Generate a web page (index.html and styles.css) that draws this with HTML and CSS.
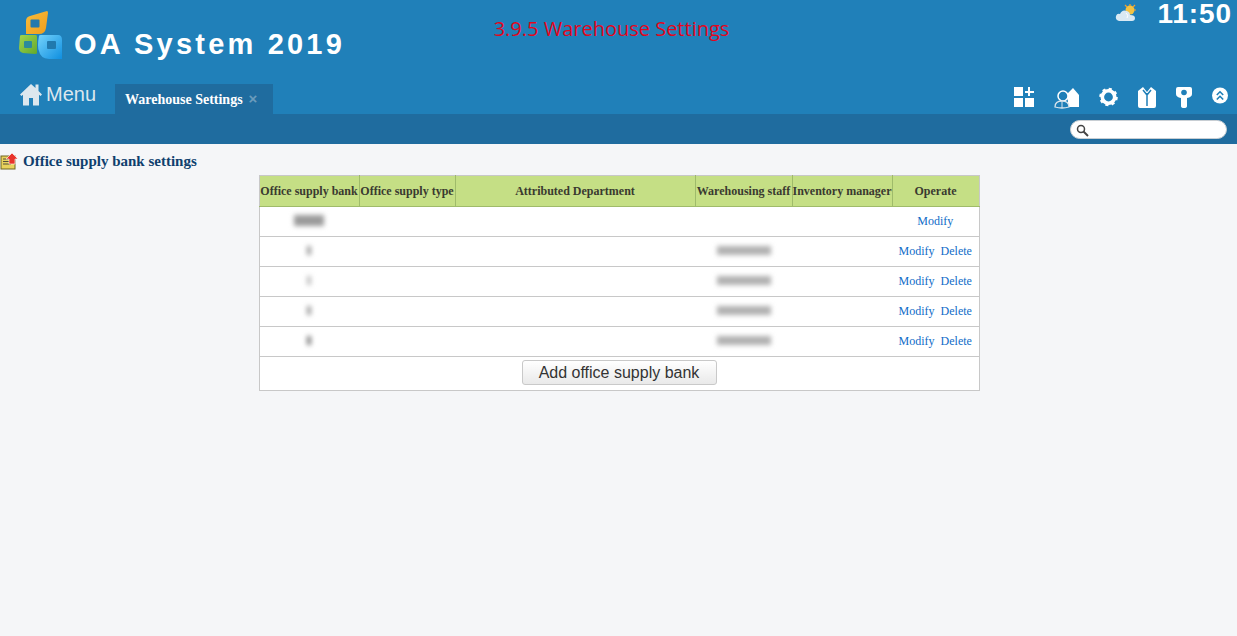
FILE: index.html
```html
<!DOCTYPE html>
<html lang="en">
<head>
<meta charset="utf-8">
<title>OA System 2019</title>
<link rel="stylesheet" href="styles.css">
</head>
<body>
<header class="header">
  <div class="top">
    <div class="brand">
      <svg class="logo" width="50" height="54" viewBox="0 0 50 54">
        <defs>
          <linearGradient id="lgO" x1="0" y1="0" x2="1" y2="1"><stop offset="0" stop-color="#f7bd3c"/><stop offset="1" stop-color="#f09d1c"/></linearGradient>
          <linearGradient id="lgG" x1="0" y1="0" x2="1" y2="1"><stop offset="0" stop-color="#a3d64e"/><stop offset="1" stop-color="#62a82c"/></linearGradient>
          <linearGradient id="lgB" x1="0" y1="0" x2="1" y2="1"><stop offset="0" stop-color="#74d2fb"/><stop offset="1" stop-color="#0f8fe0"/></linearGradient>
        </defs>
        <path d="M11 10Q11 6 15 5L32 0Q33 0 33 2L31 17Q30 23 24 23H11Z" fill="url(#lgO)"/>
        <rect x="15.500" y="8.500" width="9" height="8" rx="1" fill="#2179ae"/>
        <path d="M5 25Q5 24 7 24H21Q22 24 22 26V42Q22 43 20 43L8 42Q4 41 4 37Z" fill="url(#lgG)"/>
        <rect x="9" y="30" width="8" height="7" rx="1" fill="#2c8a9c"/>
        <path d="M24 25Q24 24 26 24H43Q47 24 47 29V48L34 48Q25 47 24 40Q22 36 24 25Z" fill="url(#lgB)"/>
        <rect x="32" y="30" width="9" height="8" rx="1" fill="#2179ae"/>
      </svg>
      <span class="brand-name">OA System 2019</span>
    </div>
    <div class="page-title">3.9.5 Warehouse Settings</div>
    <div class="status">
      <svg class="weather" width="22" height="18" viewBox="0 0 22 18">
        <circle cx="15" cy="6" r="4.500" fill="#f3c342"/>
        <path d="M15 0v2M20 1l-2 2M10 1l2 2M21 6h-2" stroke="#f0a030" stroke-width="1.200"/>
        <path d="M4 17Q0 16 1 12Q2 9 5 10Q7 5 12 7Q15 8 15 11Q20 11 20 14Q20 17 17 17Z" fill="#d9e9f3"/>
        <path d="M11 9Q14 11 12 14" fill="none" stroke="#fff"/>
      </svg>
      <span class="clock">11:50</span>
    </div>
  </div>
  <div class="nav">
    <a class="menu">
      <svg width="22" height="24" viewBox="0 0 22 24"><path d="M11 2 0 12.500l1.500 1.500L3 12.800V23.500H9V16h4v7.500h6V12.800L20.500 14 22 12.500 18.500 9V2.500H15.500V6Z" fill="#dce7ee"/></svg>
      <span>Menu</span>
    </a>
    <div class="tab"><span class="tab-label">Warehouse Settings</span><span class="tab-close">×</span></div>
    <div class="tools">
      <svg width="20" height="20" viewBox="0 0 20 20" fill="#fff"><rect x="0" y="0" width="9" height="9"/><rect x="0" y="11" width="9" height="9"/><rect x="11" y="11" width="9" height="9"/><path d="M14 0h2v4h4v2h-4v3h-2V6h-3V4h3Z"/></svg>
      <svg width="25" height="22" viewBox="0 0 25 22"><path d="M12 8 19 1l6 7v12H14V14Z" fill="#fff"/><circle cx="9" cy="9" r="5" fill="#1f7fb8" stroke="#fff" stroke-width="1.500"/><path d="M1 20Q1 14 8 14Q15 14 15 20Q8 22 1 20Z" fill="#1f7fb8" stroke="#d8e4ec" stroke-width="1.300"/><path d="M8 14v7" stroke="#d8e4ec"/></svg>
      <svg width="19" height="20" viewBox="0 0 19 20"><circle cx="9.500" cy="10" r="6.200" fill="none" stroke="#fff" stroke-width="3.600"/><circle cx="9.500" cy="10" r="8" fill="none" stroke="#fff" stroke-width="2.600" stroke-dasharray="3 3.280"/></svg>
      <svg width="18" height="21" viewBox="0 0 18 21"><path d="M0 4 5 0 9 5 13 0 18 4V19Q18 21 16 21H2Q0 21 0 19Z" fill="#fff"/><path d="M9 6v13M5 3l4 5 4-5" fill="none" stroke="#1f7fb8" stroke-width="1.500"/></svg>
      <svg width="16" height="21" viewBox="0 0 16 21"><path d="M2 0H14Q16 0 16 2V7Q16 10 11 11V19Q11 21 8 21Q5 21 5 19V11Q0 10 0 7V2Q0 0 2 0Z" fill="#fff"/><circle cx="8" cy="5.500" r="2.800" fill="#1f7fb8"/></svg>
      <svg width="16" height="17" viewBox="0 0 16 17"><circle cx="8" cy="8.500" r="8" fill="#fff"/><path d="M4.800 8 8 4.800 11.200 8M4.800 12.500 8 9.300 11.200 12.500" fill="none" stroke="#1f7fb8" stroke-width="1.600"/></svg>
    </div>
  </div>
  <div class="subbar">
    <div class="search">
      <svg width="13" height="13" viewBox="0 0 13 13"><circle cx="5" cy="5" r="3.500" fill="none" stroke="#444" stroke-width="1.500"/><path d="M7.500 7.500 12 12" stroke="#444" stroke-width="2"/></svg>
    </div>
  </div>
</header>
<main class="content">
  <h1 class="section-title">
    <svg width="19" height="17" viewBox="0 0 19 17">
      <rect x="1" y="3" width="14" height="13" fill="#e9d25c" stroke="#6f6420"/>
      <path d="M3 6h7M3 8.500h7M3 11h8" stroke="#55503a"/>
      <path d="M12 0 18 6H15V11H9V6H6Z" fill="#e8332a" stroke="#fff" stroke-width=".6"/>
    </svg>
    <span>Office supply bank settings</span>
  </h1>
  <table class="grid">
    <colgroup>
      <col class="c1"><col class="c2"><col class="c3"><col class="c4"><col class="c5"><col class="c6">
    </colgroup>
    <thead>
      <tr>
        <th>Office supply bank</th><th>Office supply type</th><th>Attributed Department</th><th>Warehousing staff</th><th>Inventory manager</th><th>Operate</th>
      </tr>
    </thead>
    <tbody>
      <tr><td><span class="smudge wide"></span></td><td></td><td></td><td></td><td></td><td class="ops"><a>Modify</a></td></tr>
      <tr><td><span class="smudge dot light"></span></td><td></td><td></td><td><span class="smudge long"></span></td><td></td><td class="ops"><a>Modify</a><a>Delete</a></td></tr>
      <tr><td><span class="smudge dot lighter"></span></td><td></td><td></td><td><span class="smudge long"></span></td><td></td><td class="ops"><a>Modify</a><a>Delete</a></td></tr>
      <tr><td><span class="smudge dot light"></span></td><td></td><td></td><td><span class="smudge long"></span></td><td></td><td class="ops"><a>Modify</a><a>Delete</a></td></tr>
      <tr><td><span class="smudge dot"></span></td><td></td><td></td><td><span class="smudge long"></span></td><td></td><td class="ops"><a>Modify</a><a>Delete</a></td></tr>
    </tbody>
    <tfoot>
      <tr><td colspan="6"><button class="add" type="button">Add office supply bank</button></td></tr>
    </tfoot>
  </table>
</main>
</body>
</html>
```
FILE: styles.css
```css
* { box-sizing: border-box; }
html, body { margin: 0; height: 100%; }
body { background: #f5f6f8; overflow: hidden; font-family: "Liberation Serif", serif; }

.header { background: #2080b9; height: 144px; display: flex; flex-direction: column; }
.top { height: 84px; position: relative; display: flex; justify-content: space-between; }
.brand { display: flex; align-items: flex-start; padding: 11px 0 0 15px; }
.logo { display: block; }
.brand-name { font: bold 29px/1 "Liberation Sans", sans-serif; color: #fff; letter-spacing: 3.200px; margin: 19px 0 0 9px; }
.page-title { position: absolute; left: 0; right: 14px; top: 17px; text-align: center; color: #e2061d; font: 20px/24px "Open Sans", sans-serif; }
.status { display: flex; align-items: flex-start; padding: 0 5px 0 0; }
.weather { margin: 4px 20px 0 0; }
.clock { font: bold 28px/28px "Liberation Sans", sans-serif; color: #fff; letter-spacing: .9px; }

.nav { height: 30px; display: flex; align-items: flex-start; padding-left: 20px; }
.menu { display: flex; align-items: center; height: 24px; margin-top: -2px; width: 95px; color: #dce7ee; font: 20px/24px "Liberation Sans", sans-serif; gap: 4px; }
.tab { height: 30px; width: 158px; background: #1f6c9f; display: flex; align-items: center; padding: 2px 0 0 10px; }
.tab-label { color: #fff; font: bold 14px/1 "Liberation Serif", serif; }
.tab-close { color: #6b9cbc; font: bold 15px/1 "Liberation Sans", sans-serif; margin-left: 6px; margin-top: -3px; }
.tools { margin-left: auto; display: flex; align-items: flex-start; gap: 20px; padding: 3px 9px 0 0; }

.subbar { height: 30px; background: #1f6c9f; display: flex; justify-content: flex-end; align-items: flex-start; padding: 6px 10px 0 0; }
.search { width: 157px; height: 19px; border-radius: 10px; background: #fff; border: 1px solid #c8ced3; padding: 2px 0 0 5px; display: flex; align-items: center; }

.content { display: flex; flex-direction: column; align-items: center; }
.section-title { align-self: flex-start; display: flex; align-items: center; gap: 4px; margin: 0; height: 31px; padding: 3px 0 0 0; font: bold 15px/1 "Liberation Serif", serif; color: #0f3f6e; }

.grid { width: 721px; margin-left: 1px; table-layout: fixed; border-collapse: collapse; background: #fff; border: 1px solid #c8c8c8; font-size: 12px; }
.c1 { width: 100px; } .c2 { width: 96px; } .c3 { width: 240px; } .c4 { width: 97px; } .c5 { width: 100px; }
.grid th { height: 31px; padding: 0; background: #c5df85; border-left: 1px solid #9fbb6a; border-bottom: 1px solid #9fbb6a; color: #3a3a30; font-weight: bold; font-size: 12px; white-space: nowrap; }
.grid th:first-child { border-left: 0; }
.grid td { height: 30px; padding: 0; border-bottom: 1px solid #c8c8c8; text-align: center; }
.grid tfoot td { height: 34px; border-bottom: 0; vertical-align: top; padding-top: 3px; }
.ops { color: #0f6cc8; white-space: nowrap; }
.ops a { margin: 0 3px; }

.smudge { display: inline-block; height: 9px; background: #a9a9a9; filter: blur(2.500px); vertical-align: middle; margin-top: -3px; }
.wide { width: 30px; height: 11px; background: #9a9a9a; }
.long { width: 54px; background: #b0b0b0; }
.dot { width: 4px; height: 9px; background: #777; }
.light { background: #999; }
.lighter { background: #bbb; }

.add { width: 195px; height: 25px; padding: 0; border: 1px solid #c9c9c9; border-radius: 3px; background: linear-gradient(#fff, #e9e9e9); color: #333; font: 16px/1 "Liberation Sans", sans-serif; }
```
